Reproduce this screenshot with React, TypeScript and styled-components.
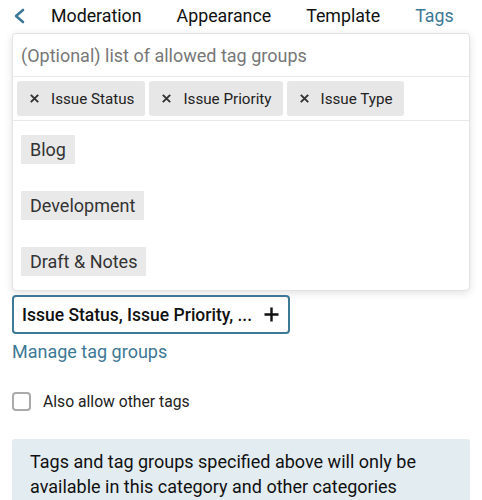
import React from "react";
import styled, { createGlobalStyle } from "styled-components";

const GlobalStyle = createGlobalStyle`
  html, body {
    margin: 0;
    padding: 0;
    background: #fff;
    font-family: Roboto, "Noto Sans", sans-serif;
    color: #222;
  }
`;

const TEAL = "#3d7896";

const selected = ["Issue Status", "Issue Priority", "Issue Type"];
const options = ["Blog", "Development", "Draft & Notes"];

const BackIcon = () => (
  <svg width="12" height="16" viewBox="0 0 12 16" fill="none">
    <polyline
      points="10,2 3,8 10,14"
      stroke={TEAL}
      strokeWidth="2.6"
      strokeLinecap="round"
      strokeLinejoin="round"
    />
  </svg>
);

const RemoveIcon = () => (
  <svg width="9" height="9" viewBox="0 0 9 9" fill="none">
    <path d="M0.8 0.8L8.2 8.2M8.2 0.8L0.8 8.2" stroke="#333" strokeWidth="1.9" />
  </svg>
);

const PlusIcon = () => (
  <svg width="15" height="15" viewBox="0 0 15 15" fill="none">
    <path d="M7.5 0.5V14.5M0.5 7.5H14.5" stroke="#111" strokeWidth="2.4" />
  </svg>
);

const App = () => {
  return (
    <Page>
      <GlobalStyle />
      <Nav>
        <BackButton>
          <BackIcon />
        </BackButton>
        <NavItem>Moderation</NavItem>
        <NavItem>Appearance</NavItem>
        <NavItem>Template</NavItem>
        <NavItem $active>Tags</NavItem>
      </Nav>

      <Dropdown>
        <FilterRow>(Optional) list of allowed tag groups</FilterRow>
        <ChipsRow>
          {selected.map((name) => (
            <Chip key={name}>
              <RemoveIcon />
              {name}
            </Chip>
          ))}
        </ChipsRow>
        <OptionList>
          {options.map((name) => (
            <OptionRow key={name}>
              <OptionTag>{name}</OptionTag>
            </OptionRow>
          ))}
        </OptionList>
      </Dropdown>

      <Trigger>
        <TriggerText>Issue Status, Issue Priority, ...</TriggerText>
        <PlusIcon />
      </Trigger>

      <ManageLink>Manage tag groups</ManageLink>

      <CheckRow>
        <Checkbox />
        Also allow other tags
      </CheckRow>

      <InfoBox>
        Tags and tag groups specified above will only be available in this
        category and other categories
      </InfoBox>
    </Page>
  );
};

const Page = styled.div`
  padding: 0 12px;
  height: 500px;
  overflow: hidden;
`;

const Nav = styled.div`
  display: flex;
  align-items: center;
  height: 31px;
  gap: 35px;
`;

const BackButton = styled.div`
  display: flex;
  align-items: center;
  flex-shrink: 0;
  width: 12px;
  margin-left: 1px;
  margin-right: -9px;
`;

const NavItem = styled.div<{ $active?: boolean }>`
  font-size: 17.8px;
  color: ${({ $active }) => ($active ? TEAL : "#111")};
  white-space: nowrap;
`;

const Dropdown = styled.div`
  margin-top: 2px;
  border: 1px solid #e2e2e2;
  border-radius: 4px;
  box-shadow: 0 2px 8px rgba(0, 0, 0, 0.12);
  background: #fff;
`;

const FilterRow = styled.div`
  height: 42px;
  display: flex;
  align-items: center;
  padding-left: 8px;
  font-size: 18px;
  color: #777;
  border-bottom: 1px solid #e9e9e9;
`;

const ChipsRow = styled.div`
  display: flex;
  gap: 4px;
  padding: 4px;
  border-bottom: 1px solid #e9e9e9;
`;

const Chip = styled.div`
  display: flex;
  align-items: center;
  gap: 12px;
  height: 35px;
  padding: 0 11px 0 13px;
  background: #e7e7e7;
  border-radius: 3px;
  font-size: 15.2px;
  color: #222;
`;

const OptionList = styled.div`
  padding-bottom: 1px;
`;

const OptionRow = styled.div`
  height: 56px;
  display: flex;
  align-items: center;
  padding-left: 8px;
`;

const OptionTag = styled.span`
  background: #e9e9e9;
  padding: 0 9px;
  line-height: 29px;
  font-size: 18px;
  color: #333;
`;

const Trigger = styled.div`
  margin-top: 4px;
  width: 278px;
  height: 39px;
  box-sizing: border-box;
  border: 2px solid ${TEAL};
  border-radius: 4px;
  display: flex;
  align-items: center;
  justify-content: space-between;
  padding: 0 9px 0 8px;
  color: #111;
`;

const TriggerText = styled.span`
  font-size: 17.5px;
  font-weight: 500;
`;

const ManageLink = styled.div`
  margin-top: 6px;
  font-size: 18px;
  line-height: 24px;
  color: ${TEAL};
`;

const CheckRow = styled.label`
  display: flex;
  align-items: center;
  gap: 12px;
  margin-top: 28px;
  font-size: 15.7px;
  color: #222;
`;

const Checkbox = styled.span`
  width: 19px;
  height: 19px;
  box-sizing: border-box;
  border: 2px solid #aaa;
  border-radius: 4px;
`;

const InfoBox = styled.div`
  margin-top: 28px;
  background: #e3ecf1;
  border-radius: 3px;
  padding: 10px 18px;
  font-size: 18px;
  line-height: 25px;
  color: #111;
`;

export default App;
